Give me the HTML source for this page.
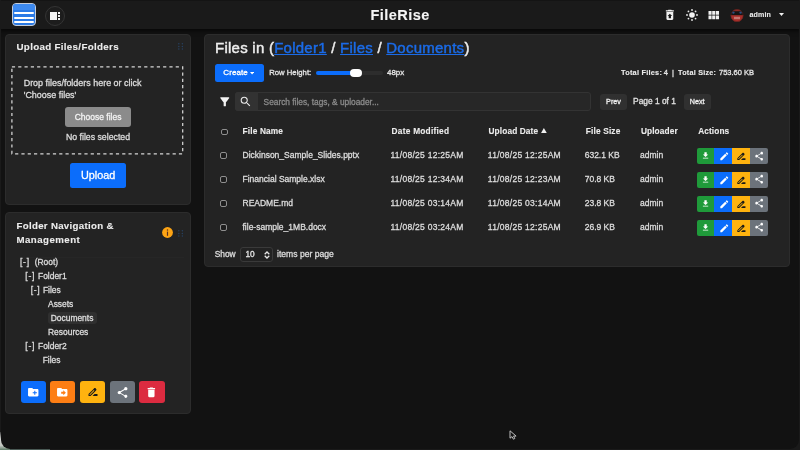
<!DOCTYPE html>
<html><head><meta charset="utf-8">
<style>
*{box-sizing:border-box;margin:0;padding:0}
html,body{width:800px;height:450px;overflow:hidden;background:#1a1a1a}
body{font-family:"Liberation Sans",sans-serif;position:relative}
#win{will-change:transform;position:absolute;left:1px;top:0;width:798px;height:449px;background:#121212;border-radius:0 0 9px 9px;overflow:hidden}
.r{position:absolute}
.t{position:absolute;white-space:nowrap;-webkit-text-stroke:0.3px currentColor}
</style></head><body>
<div class="r" style="left:0;top:432px;width:14px;height:18px;background:linear-gradient(#3a3a3a,#d0d2cf 40%,#c4c8c2 75%,#5f7d68)"></div><div class="r" style="left:10px;top:448px;width:40px;height:2px;background:#4a5a55"></div>
<div id="win">
<div style="position:absolute;left:-1px;top:0;width:800px;height:450px">

<div class="r" style="left:0px;top:0px;width:800px;height:28.5px;background:#1a1a1a;box-shadow:0 2px 4px rgba(0,0,0,.65)"></div>
<div class="r" style="left:0px;top:0px;width:800px;height:1px;background:#141414;"></div>
<div class="r" style="left:12px;top:3px;width:24px;height:23px;background:#2a7ae6;border:1px solid #c4ccd8;border-radius:4px"></div>
<div class="r" style="left:13px;top:4px;width:22px;height:6px;background:#3d8af0;border-radius:3px 3px 0 0"></div>
<div class="r" style="left:14px;top:12px;width:20px;height:2.4px;background:#fff;border-radius:1px"></div>
<div class="r" style="left:14px;top:16.7px;width:20px;height:2.4px;background:#fff;border-radius:1px"></div>
<div class="r" style="left:14px;top:21px;width:20px;height:2.4px;background:#fff;border-radius:1px"></div>
<div class="r" style="left:45px;top:6px;width:20px;height:20px;background:#1d1d1d;border:1px solid #343434;border-radius:50%"></div>
<div class="r" style="left:50px;top:11.6px;width:7.2px;height:8px;background:#f2f2f2;"></div>
<div class="r" style="left:58px;top:12px;width:2.1px;height:2px;background:#f2f2f2;"></div>
<div class="r" style="left:58px;top:15.1px;width:2.1px;height:2px;background:#f2f2f2;"></div>
<div class="r" style="left:58px;top:18px;width:2.1px;height:2px;background:#f2f2f2;"></div>
<div class="t" style="left:370.5px;top:7.73px;font-size:14.54px;line-height:14.54px;color:#f5f5f5;font-weight:bold;-webkit-text-stroke:0.1px currentColor;letter-spacing:0.459px;">FileRise</div>
<svg class="r" style="left:662.55px;top:8.30px;" width="13.68" height="13.68" viewBox="0 0 24 24"><path d="M19 4h-3.5l-1-1h-5l-1 1H5v2h14zM6 7v12c0 1.1.9 2 2 2h8c1.1 0 2-.9 2-2V7H6zm8 7v4h-4v-4H8l4-4 4 4h-2z" fill="#f0f0f0"/></svg>
<svg class="r" style="left:684.8px;top:7.8px;" width="14" height="14" viewBox="0 0 14 14"><circle cx="7" cy="7" r="2.8" fill="#f2f2f2"/><circle cx="7.00" cy="2.00" r="0.9" fill="#eaeaea"/><circle cx="10.54" cy="3.46" r="0.9" fill="#eaeaea"/><circle cx="12.00" cy="7.00" r="0.9" fill="#eaeaea"/><circle cx="10.54" cy="10.54" r="0.9" fill="#eaeaea"/><circle cx="7.00" cy="12.00" r="0.9" fill="#eaeaea"/><circle cx="3.46" cy="10.54" r="0.9" fill="#eaeaea"/><circle cx="2.00" cy="7.00" r="0.9" fill="#eaeaea"/><circle cx="3.46" cy="3.46" r="0.9" fill="#eaeaea"/></svg>
<svg class="r" style="left:706.30px;top:7.70px;" width="14.88" height="14.88" viewBox="0 0 24 24"><path d="M4 11h5V5H4v6zm0 7h5v-6H4v6zm6 0h5v-6h-5v6zm6 0h5v-6h-5v6zm-6-7h5V5h-5v6zm6-6v6h5V5h-5z" fill="#f0f0f0"/></svg>
<svg class="r" style="left:730.3px;top:9px;" width="14" height="13" viewBox="0 0 14 13"><defs><clipPath id="av"><circle cx="7" cy="6.5" r="6.3"/></clipPath></defs><g clip-path="url(#av)"><rect width="14" height="13" fill="#3a1a18"/><rect y="0" width="14" height="2.4" fill="#8a2a26"/><rect y="2.4" width="14" height="3.8" fill="#151515"/><rect y="6.2" width="14" height="7" fill="#a82e2a"/><rect x="4" y="7.8" width="6" height="2.4" fill="#d8b0a8" opacity=".55"/><circle cx="3.4" cy="3.6" r="1.2" fill="#2d4e80"/><circle cx="10.6" cy="3.6" r="1.2" fill="#2d4e80"/></g><circle cx="7" cy="6.5" r="6.1" fill="none" stroke="#5a2420" stroke-width=".6"/></svg>
<div class="t" style="left:749.4px;top:11.75px;font-size:7.1px;line-height:7.1px;color:#e8e8e8;font-weight:bold;-webkit-text-stroke:0.1px currentColor;letter-spacing:0.15px;">admin</div>
<svg class="r" style="left:778.8px;top:13.2px;" width="5" height="3" viewBox="0 0 5 3"><path d="M0 0h5L2.5 3z" fill="#f0f0f0"/></svg>
<div class="r" style="left:5px;top:33.5px;width:186px;height:171px;background:#232323;border:1px solid #2c2c2c;border-radius:4px"></div>
<div class="t" style="left:16.5px;top:42.20px;font-size:9.79px;line-height:9.79px;color:#ececec;font-weight:bold;-webkit-text-stroke:0.1px currentColor;letter-spacing:0.309px;">Upload Files/Folders</div>
<svg class="r" style="left:178px;top:43.4px;" width="6" height="7" viewBox="0 0 6 7"><circle cx="0.8" cy="0.8" r="0.75" fill="#27405f"/><circle cx="0.8" cy="3.4" r="0.75" fill="#27405f"/><circle cx="0.8" cy="6.0" r="0.75" fill="#27405f"/><circle cx="4.4" cy="0.8" r="0.75" fill="#27405f"/><circle cx="4.4" cy="3.4" r="0.75" fill="#27405f"/><circle cx="4.4" cy="6.0" r="0.75" fill="#27405f"/></svg>
<svg class="r" style="left:11.3px;top:66.3px;" width="173" height="89" viewBox="0 0 173 89"><rect x="0.9" y="0.9" width="170.8" height="86.9" fill="none" stroke="#d6d6d6" stroke-width="1.25" stroke-dasharray="3.2 3.1"/></svg>
<div class="t" style="left:23.7px;top:79.33px;font-size:8.95px;line-height:8.95px;color:#dcdcdc;">Drop files/folders here or click</div>
<div class="t" style="left:23.7px;top:91.23px;font-size:8.95px;line-height:8.95px;color:#dcdcdc;">'Choose files'</div>
<div class="r" style="left:64.8px;top:106.7px;width:66px;height:20px;background:#8b8b8b;border-radius:3px"></div>
<div class="t" style="left:74.7px;top:112.75px;font-size:8.5px;line-height:8.5px;color:#f2f2f2;">Choose files</div>
<div class="t" style="left:65.9px;top:133.12px;font-size:8.75px;line-height:8.75px;color:#dcdcdc;">No files selected</div>
<div class="r" style="left:69.9px;top:163.2px;width:56.3px;height:24.5px;background:#0b6dfb;border-radius:2.5px"></div>
<div class="t" style="left:81px;top:169.97px;font-size:10.85px;line-height:10.85px;color:#ffffff;">Upload</div>
<div class="r" style="left:5px;top:211.5px;width:185.5px;height:202px;background:#232323;border:1px solid #2c2c2c;border-radius:4px"></div>
<div class="t" style="left:16.5px;top:220.85px;font-size:9.69px;line-height:9.69px;color:#ececec;font-weight:bold;-webkit-text-stroke:0.1px currentColor;letter-spacing:0.306px;">Folder Navigation &amp;</div>
<div class="t" style="left:16.5px;top:234.95px;font-size:9.7px;line-height:9.7px;color:#ececec;font-weight:bold;-webkit-text-stroke:0.1px currentColor;letter-spacing:0.45px;">Management</div>
<svg class="r" style="left:161.9px;top:227.4px;" width="11" height="11" viewBox="0 0 11 11"><circle cx="5.5" cy="5.5" r="5.4" fill="#fda414"/><rect x="4.9" y="4.6" width="1.2" height="4.2" fill="#5a3020"/><circle cx="5.5" cy="3.1" r="0.75" fill="#5a3020"/></svg>
<svg class="r" style="left:178px;top:230px;" width="6" height="7" viewBox="0 0 6 7"><circle cx="0.8" cy="0.8" r="0.75" fill="#27405f"/><circle cx="0.8" cy="3.4" r="0.75" fill="#27405f"/><circle cx="0.8" cy="6.0" r="0.75" fill="#27405f"/><circle cx="4.4" cy="0.8" r="0.75" fill="#27405f"/><circle cx="4.4" cy="3.4" r="0.75" fill="#27405f"/><circle cx="4.4" cy="6.0" r="0.75" fill="#27405f"/></svg>
<div class="r" style="left:20px;top:256.5px;width:164px;height:1px;background:#262626;"></div>
<div class="r" style="left:48px;top:312px;width:48.5px;height:12px;background:#2f2f2f;border-radius:3px"></div>
<div class="t" style="left:20px;top:258.00px;font-size:8.6px;line-height:8.6px;color:#dcdcdc;letter-spacing:0.7px;">[-]</div>
<div class="t" style="left:34.7px;top:258.07px;font-size:8.45px;line-height:8.45px;color:#dcdcdc;">(Root)</div>
<div class="t" style="left:25.3px;top:271.95px;font-size:8.6px;line-height:8.6px;color:#dcdcdc;letter-spacing:0.7px;">[-]</div>
<div class="t" style="left:38px;top:272.02px;font-size:8.45px;line-height:8.45px;color:#dcdcdc;">Folder1</div>
<div class="t" style="left:30.7px;top:285.90px;font-size:8.6px;line-height:8.6px;color:#dcdcdc;letter-spacing:0.7px;">[-]</div>
<div class="t" style="left:42.9px;top:285.97px;font-size:8.45px;line-height:8.45px;color:#dcdcdc;">Files</div>
<div class="t" style="left:48px;top:299.92px;font-size:8.45px;line-height:8.45px;color:#dcdcdc;">Assets</div>
<div class="t" style="left:50.7px;top:313.88px;font-size:8.45px;line-height:8.45px;color:#dcdcdc;">Documents</div>
<div class="t" style="left:48px;top:327.82px;font-size:8.45px;line-height:8.45px;color:#dcdcdc;">Resources</div>
<div class="t" style="left:25.3px;top:341.70px;font-size:8.6px;line-height:8.6px;color:#dcdcdc;letter-spacing:0.7px;">[-]</div>
<div class="t" style="left:38px;top:341.77px;font-size:8.45px;line-height:8.45px;color:#dcdcdc;">Folder2</div>
<div class="t" style="left:42.7px;top:355.72px;font-size:8.45px;line-height:8.45px;color:#dcdcdc;">Files</div>
<div class="r" style="left:20.8px;top:381.3px;width:25.2px;height:22px;background:#0b6dfb;border-radius:3px"></div>
<div class="r" style="left:50.1px;top:381.3px;width:25.2px;height:22px;background:#fd7e14;border-radius:3px"></div>
<div class="r" style="left:80.1px;top:381.3px;width:25.2px;height:22px;background:#ffb30f;border-radius:3px"></div>
<div class="r" style="left:109.6px;top:381.3px;width:25.2px;height:22px;background:#6c737b;border-radius:3px"></div>
<div class="r" style="left:139.4px;top:381.3px;width:25.2px;height:22px;background:#dc2b40;border-radius:3px"></div>
<svg class="r" style="left:26.90px;top:386.00px;" width="12.48" height="12.48" viewBox="0 0 24 24"><path d="M20 6h-8l-2-2H4c-1.11 0-1.99.89-1.99 2L2 18c0 1.11.89 2 2 2h16c1.11 0 2-.89 2-2V8c0-1.11-.89-2-2-2zm-1 8h-3v3h-2v-3h-3v-2h3V9h2v3h3v2z" fill="#fff"/></svg>
<svg class="r" style="left:56.20px;top:386.00px;" width="12.48" height="12.48" viewBox="0 0 24 24"><path d="M20 6h-8l-2-2H4c-1.1 0-1.99.9-1.99 2L2 18c0 1.1.9 2 2 2h16c1.1 0 2-.9 2-2V8c0-1.1-.9-2-2-2zm-6 12v-3h-4v-4h4V8l5 5-5 5z" fill="#fff"/></svg>
<svg class="r" style="left:86.60px;top:386.30px;" width="12.00" height="12.00" viewBox="0 0 24 24"><path d="M18.41 5.8L17.2 4.59c-.78-.78-2.05-.78-2.83 0l-2.68 2.68L3 15.96V20h4.04l8.74-8.74 2.63-2.63c.79-.78.79-2.05 0-2.83zM6.21 18H5v-1.21l8.66-8.66 1.21 1.21L6.21 18zM11 20l4-4h6v4H11z" fill="#1a1a1a"/></svg>
<svg class="r" style="left:115.60px;top:385.70px;" width="13.08" height="13.08" viewBox="0 0 24 24"><path d="M18 16.08c-.76 0-1.44.3-1.96.77L8.91 12.7c.05-.23.09-.46.09-.7s-.04-.47-.09-.7l7.05-4.11c.54.5 1.25.81 2.04.81 1.66 0 3-1.34 3-3s-1.34-3-3-3-3 1.34-3 3c0 .24.04.47.09.7L8.04 9.81C7.5 9.31 6.79 9 6 9c-1.66 0-3 1.34-3 3s1.34 3 3 3c.79 0 1.5-.31 2.04-.81l7.12 4.16c-.05.21-.08.43-.08.65 0 1.61 1.31 2.92 2.92 2.92 1.61 0 2.92-1.31 2.92-2.92s-1.31-2.92-2.92-2.92z" fill="#fff"/></svg>
<svg class="r" style="left:145.45px;top:386.30px;" width="12.72" height="12.72" viewBox="0 0 24 24"><path d="M6 19c0 1.1.9 2 2 2h8c1.1 0 2-.9 2-2V7H6v12zM19 4h-3.5l-1-1h-5l-1 1H5v2h14V4z" fill="#fff"/></svg>
<div class="r" style="left:203.5px;top:33.5px;width:586px;height:233px;background:#232323;border:1px solid #2c2c2c;border-radius:4px"></div>
<div class="t" style="left:215px;top:40.20px;font-size:15.0px;line-height:15.0px;color:#eeeeee;letter-spacing:0.25px;-webkit-text-stroke:0.45px currentColor;">Files in (<span style="color:#1a6be8;text-decoration:underline;text-decoration-thickness:1px;text-underline-offset:0.6px">Folder1</span> / <span style="color:#1a6be8;text-decoration:underline;text-decoration-thickness:1px;text-underline-offset:0.6px">Files</span> / <span style="color:#1a6be8;text-decoration:underline;text-decoration-thickness:1px;text-underline-offset:0.6px">Documents</span>)</div>
<div class="r" style="left:214.9px;top:63.8px;width:49.3px;height:18.4px;background:#0b6dfb;border-radius:2.5px"></div>
<div class="t" style="left:223.3px;top:69.40px;font-size:8px;line-height:8px;color:#ffffff;letter-spacing:0.1px;">Create</div>
<svg class="r" style="left:249.8px;top:72.4px;" width="4.2" height="2.4" viewBox="0 0 4.2 2.4"><path d="M0 0h4.2L2.1 2.4z" fill="#fff"/></svg>
<div class="t" style="left:269.3px;top:69.15px;font-size:7.7px;line-height:7.7px;color:#e4e4e4;">Row Height:</div>
<div class="r" style="left:316px;top:71.4px;width:67px;height:3.8px;background:#2d2d2d;border-radius:2px"></div>
<div class="r" style="left:316px;top:71.4px;width:38px;height:3.8px;background:#0b6dfb;border-radius:2px"></div>
<div class="r" style="left:349.5px;top:68.9px;width:12.5px;height:8.2px;background:#ffffff;border-radius:4px"></div>
<div class="t" style="left:387px;top:68.75px;font-size:7.9px;line-height:7.9px;color:#e4e4e4;">48px</div>
<div class="t" style="left:621px;top:69.02px;font-size:7.36px;line-height:7.36px;color:#ececec;font-weight:bold;-webkit-text-stroke:0.1px currentColor;letter-spacing:0.232px;">Total Files:</div>
<div class="t" style="left:663.7px;top:68.95px;font-size:7.5px;line-height:7.5px;color:#e4e4e4;">4</div>
<div class="t" style="left:672px;top:68.95px;font-size:7.5px;line-height:7.5px;color:#e4e4e4;">|</div>
<div class="t" style="left:678.1px;top:69.09px;font-size:7.22px;line-height:7.22px;color:#ececec;font-weight:bold;-webkit-text-stroke:0.1px currentColor;letter-spacing:0.228px;">Total Size:</div>
<div class="t" style="left:719px;top:68.95px;font-size:7.5px;line-height:7.5px;color:#e4e4e4;">753.60 KB</div>
<svg class="r" style="left:218.40px;top:95.40px;" width="13.56" height="13.56" viewBox="0 0 24 24"><path d="M4.25 5.61C6.27 8.2 10 13 10 13v6c0 .55.45 1 1 1h2c.55 0 1-.45 1-1v-6s3.72-4.8 5.74-7.39A.998.998 0 0 0 18.95 4H5.04c-.83 0-1.3.95-.79 1.61z" fill="#f2f2f2"/></svg>
<div class="r" style="left:235px;top:92.1px;width:355.5px;height:19.3px;background:#272727;border:1px solid #333333;border-radius:3px"></div>
<div class="r" style="left:235px;top:92.1px;width:23px;height:19.3px;background:#323232;border-radius:3px 0 0 3px"></div>
<svg class="r" style="left:239.10px;top:95.20px;" width="13.20" height="13.20" viewBox="0 0 24 24"><path d="M15.5 14h-.79l-.28-.27A6.471 6.471 0 0 0 16 9.5 6.5 6.5 0 1 0 9.5 16c1.61 0 3.09-.59 4.23-1.57l.27.28v.79l5 4.99L20.49 19l-4.99-5zm-6 0C7.01 14 5 11.99 5 9.5S7.01 5 9.5 5 14 7.01 14 9.5 11.99 14 9.5 14z" fill="#eaeaea"/></svg>
<div class="t" style="left:263.6px;top:98.03px;font-size:8.33px;line-height:8.33px;color:#8a8a8a;">Search files, tags, &amp; uploader...</div>
<div class="r" style="left:599.9px;top:93.9px;width:26.7px;height:16px;background:#303030;border-radius:3px"></div>
<div class="t" style="left:606.1px;top:98.20px;font-size:7.2px;line-height:7.2px;color:#eeeeee;">Prev</div>
<div class="t" style="left:633.1px;top:97.10px;font-size:8.4px;line-height:8.4px;color:#e0e0e0;">Page 1 of 1</div>
<div class="r" style="left:683.6px;top:93.9px;width:27.4px;height:16px;background:#303030;border-radius:3px"></div>
<div class="t" style="left:689.8px;top:98.20px;font-size:7.2px;line-height:7.2px;color:#eeeeee;">Next</div>
<div class="r" style="left:221px;top:128.6px;width:6.8px;height:6.6px;background:#1d1d1d;border:1.1px solid #8f8f8f;border-radius:2px"></div>
<div class="t" style="left:242.5px;top:127.15px;font-size:8.3px;line-height:8.3px;color:#ececec;font-weight:bold;-webkit-text-stroke:0.1px currentColor;letter-spacing:0.16px;">File Name</div>
<div class="t" style="left:391.6px;top:127.15px;font-size:8.3px;line-height:8.3px;color:#ececec;font-weight:bold;-webkit-text-stroke:0.1px currentColor;letter-spacing:0.25px;">Date Modified</div>
<div class="t" style="left:488.5px;top:127.15px;font-size:8.3px;line-height:8.3px;color:#ececec;font-weight:bold;-webkit-text-stroke:0.1px currentColor;letter-spacing:0.12px;">Upload Date</div>
<svg class="r" style="left:541.3px;top:128.2px;" width="5.8" height="5.1" viewBox="0 0 5.8 5.1"><path d="M2.9 0L5.8 5.1H0z" fill="#f0f0f0"/></svg>
<div class="t" style="left:585.8px;top:127.15px;font-size:8.3px;line-height:8.3px;color:#ececec;font-weight:bold;-webkit-text-stroke:0.1px currentColor;letter-spacing:0.16px;">File Size</div>
<div class="t" style="left:640.9px;top:127.15px;font-size:8.3px;line-height:8.3px;color:#ececec;font-weight:bold;-webkit-text-stroke:0.1px currentColor;letter-spacing:0.11px;">Uploader</div>
<div class="t" style="left:698.2px;top:127.15px;font-size:8.3px;line-height:8.3px;color:#ececec;font-weight:bold;-webkit-text-stroke:0.1px currentColor;letter-spacing:0.1px;">Actions</div>
<div class="r" style="left:220px;top:152.29999999999998px;width:6.8px;height:6.6px;background:#1d1d1d;border:1.1px solid #8f8f8f;border-radius:2px"></div>
<div class="t" style="left:242.5px;top:151.35px;font-size:8.5px;line-height:8.5px;color:#dcdcdc;">Dickinson_Sample_Slides.pptx</div>
<div class="t" style="left:390.5px;top:151.35px;font-size:8.5px;line-height:8.5px;color:#dcdcdc;letter-spacing:0.27px;">11/08/25 12:25AM</div>
<div class="t" style="left:487.8px;top:151.35px;font-size:8.5px;line-height:8.5px;color:#dcdcdc;letter-spacing:0.27px;">11/08/25 12:25AM</div>
<div class="t" style="left:584.7px;top:151.35px;font-size:8.5px;line-height:8.5px;color:#dcdcdc;">632.1 KB</div>
<div class="t" style="left:640px;top:151.35px;font-size:8.5px;line-height:8.5px;color:#dcdcdc;">admin</div>
<div class="r" style="left:697px;top:147.9px;width:17.4px;height:16.1px;background:#1f9a3a;border-radius:2px 0 0 2px"></div>
<div class="r" style="left:714.4px;top:147.9px;width:17.7px;height:16.1px;background:#0b6dfb;"></div>
<div class="r" style="left:732.1px;top:147.9px;width:17.9px;height:16.1px;background:#ffb30f;"></div>
<div class="r" style="left:750px;top:147.9px;width:18px;height:16.1px;background:#6c737b;border-radius:0 2px 2px 0"></div>
<svg class="r" style="left:701.40px;top:150.90px;" width="9.12" height="9.12" viewBox="0 0 24 24"><path d="M19 9h-4V3H9v6H5l7 7 7-7zM5 18v2h14v-2H5z" fill="#fff"/></svg>
<svg class="r" style="left:718.50px;top:151.00px;" width="10.56" height="10.56" viewBox="0 0 24 24"><path d="M3 17.25V21h3.75L17.81 9.94l-3.75-3.75L3 17.25zM20.71 7.04a1 1 0 0 0 0-1.41l-2.34-2.34a1 1 0 0 0-1.41 0l-1.83 1.83 3.75 3.75 1.83-1.83z" fill="#fff"/></svg>
<svg class="r" style="left:735.50px;top:150.80px;" width="10.80" height="10.80" viewBox="0 0 24 24"><path d="M18.41 5.8L17.2 4.59c-.78-.78-2.05-.78-2.83 0l-2.68 2.68L3 15.96V20h4.04l8.74-8.74 2.63-2.63c.79-.78.79-2.05 0-2.83zM6.21 18H5v-1.21l8.66-8.66 1.21 1.21L6.21 18zM11 20l4-4h6v4H11z" fill="#1a1a1a"/></svg>
<svg class="r" style="left:754.30px;top:150.50px;" width="10.32" height="10.32" viewBox="0 0 24 24"><path d="M18 16.08c-.76 0-1.44.3-1.96.77L8.91 12.7c.05-.23.09-.46.09-.7s-.04-.47-.09-.7l7.05-4.11c.54.5 1.25.81 2.04.81 1.66 0 3-1.34 3-3s-1.34-3-3-3-3 1.34-3 3c0 .24.04.47.09.7L8.04 9.81C7.5 9.31 6.79 9 6 9c-1.66 0-3 1.34-3 3s1.34 3 3 3c.79 0 1.5-.31 2.04-.81l7.12 4.16c-.05.21-.08.43-.08.65 0 1.61 1.31 2.92 2.92 2.92 1.61 0 2.92-1.31 2.92-2.92s-1.31-2.92-2.92-2.92z" fill="#fff"/></svg>
<div class="r" style="left:220px;top:176.2px;width:6.8px;height:6.6px;background:#1d1d1d;border:1.1px solid #8f8f8f;border-radius:2px"></div>
<div class="t" style="left:242.5px;top:175.25px;font-size:8.5px;line-height:8.5px;color:#dcdcdc;">Financial Sample.xlsx</div>
<div class="t" style="left:390.5px;top:175.25px;font-size:8.5px;line-height:8.5px;color:#dcdcdc;letter-spacing:0.27px;">11/08/25 12:34AM</div>
<div class="t" style="left:487.8px;top:175.25px;font-size:8.5px;line-height:8.5px;color:#dcdcdc;letter-spacing:0.27px;">11/08/25 12:23AM</div>
<div class="t" style="left:584.7px;top:175.25px;font-size:8.5px;line-height:8.5px;color:#dcdcdc;">70.8 KB</div>
<div class="t" style="left:640px;top:175.25px;font-size:8.5px;line-height:8.5px;color:#dcdcdc;">admin</div>
<div class="r" style="left:697px;top:171.8px;width:17.4px;height:16.1px;background:#1f9a3a;border-radius:2px 0 0 2px"></div>
<div class="r" style="left:714.4px;top:171.8px;width:17.7px;height:16.1px;background:#0b6dfb;"></div>
<div class="r" style="left:732.1px;top:171.8px;width:17.9px;height:16.1px;background:#ffb30f;"></div>
<div class="r" style="left:750px;top:171.8px;width:18px;height:16.1px;background:#6c737b;border-radius:0 2px 2px 0"></div>
<svg class="r" style="left:701.40px;top:174.80px;" width="9.12" height="9.12" viewBox="0 0 24 24"><path d="M19 9h-4V3H9v6H5l7 7 7-7zM5 18v2h14v-2H5z" fill="#fff"/></svg>
<svg class="r" style="left:718.50px;top:174.90px;" width="10.56" height="10.56" viewBox="0 0 24 24"><path d="M3 17.25V21h3.75L17.81 9.94l-3.75-3.75L3 17.25zM20.71 7.04a1 1 0 0 0 0-1.41l-2.34-2.34a1 1 0 0 0-1.41 0l-1.83 1.83 3.75 3.75 1.83-1.83z" fill="#fff"/></svg>
<svg class="r" style="left:735.50px;top:174.70px;" width="10.80" height="10.80" viewBox="0 0 24 24"><path d="M18.41 5.8L17.2 4.59c-.78-.78-2.05-.78-2.83 0l-2.68 2.68L3 15.96V20h4.04l8.74-8.74 2.63-2.63c.79-.78.79-2.05 0-2.83zM6.21 18H5v-1.21l8.66-8.66 1.21 1.21L6.21 18zM11 20l4-4h6v4H11z" fill="#1a1a1a"/></svg>
<svg class="r" style="left:754.30px;top:174.40px;" width="10.32" height="10.32" viewBox="0 0 24 24"><path d="M18 16.08c-.76 0-1.44.3-1.96.77L8.91 12.7c.05-.23.09-.46.09-.7s-.04-.47-.09-.7l7.05-4.11c.54.5 1.25.81 2.04.81 1.66 0 3-1.34 3-3s-1.34-3-3-3-3 1.34-3 3c0 .24.04.47.09.7L8.04 9.81C7.5 9.31 6.79 9 6 9c-1.66 0-3 1.34-3 3s1.34 3 3 3c.79 0 1.5-.31 2.04-.81l7.12 4.16c-.05.21-.08.43-.08.65 0 1.61 1.31 2.92 2.92 2.92 1.61 0 2.92-1.31 2.92-2.92s-1.31-2.92-2.92-2.92z" fill="#fff"/></svg>
<div class="r" style="left:220px;top:200.09999999999997px;width:6.8px;height:6.6px;background:#1d1d1d;border:1.1px solid #8f8f8f;border-radius:2px"></div>
<div class="t" style="left:242.5px;top:199.15px;font-size:8.5px;line-height:8.5px;color:#dcdcdc;">README.md</div>
<div class="t" style="left:390.5px;top:199.15px;font-size:8.5px;line-height:8.5px;color:#dcdcdc;letter-spacing:0.27px;">11/08/25 03:14AM</div>
<div class="t" style="left:487.8px;top:199.15px;font-size:8.5px;line-height:8.5px;color:#dcdcdc;letter-spacing:0.27px;">11/08/25 03:14AM</div>
<div class="t" style="left:584.7px;top:199.15px;font-size:8.5px;line-height:8.5px;color:#dcdcdc;">23.8 KB</div>
<div class="t" style="left:640px;top:199.15px;font-size:8.5px;line-height:8.5px;color:#dcdcdc;">admin</div>
<div class="r" style="left:697px;top:195.7px;width:17.4px;height:16.1px;background:#1f9a3a;border-radius:2px 0 0 2px"></div>
<div class="r" style="left:714.4px;top:195.7px;width:17.7px;height:16.1px;background:#0b6dfb;"></div>
<div class="r" style="left:732.1px;top:195.7px;width:17.9px;height:16.1px;background:#ffb30f;"></div>
<div class="r" style="left:750px;top:195.7px;width:18px;height:16.1px;background:#6c737b;border-radius:0 2px 2px 0"></div>
<svg class="r" style="left:701.40px;top:198.70px;" width="9.12" height="9.12" viewBox="0 0 24 24"><path d="M19 9h-4V3H9v6H5l7 7 7-7zM5 18v2h14v-2H5z" fill="#fff"/></svg>
<svg class="r" style="left:718.50px;top:198.80px;" width="10.56" height="10.56" viewBox="0 0 24 24"><path d="M3 17.25V21h3.75L17.81 9.94l-3.75-3.75L3 17.25zM20.71 7.04a1 1 0 0 0 0-1.41l-2.34-2.34a1 1 0 0 0-1.41 0l-1.83 1.83 3.75 3.75 1.83-1.83z" fill="#fff"/></svg>
<svg class="r" style="left:735.50px;top:198.60px;" width="10.80" height="10.80" viewBox="0 0 24 24"><path d="M18.41 5.8L17.2 4.59c-.78-.78-2.05-.78-2.83 0l-2.68 2.68L3 15.96V20h4.04l8.74-8.74 2.63-2.63c.79-.78.79-2.05 0-2.83zM6.21 18H5v-1.21l8.66-8.66 1.21 1.21L6.21 18zM11 20l4-4h6v4H11z" fill="#1a1a1a"/></svg>
<svg class="r" style="left:754.30px;top:198.30px;" width="10.32" height="10.32" viewBox="0 0 24 24"><path d="M18 16.08c-.76 0-1.44.3-1.96.77L8.91 12.7c.05-.23.09-.46.09-.7s-.04-.47-.09-.7l7.05-4.11c.54.5 1.25.81 2.04.81 1.66 0 3-1.34 3-3s-1.34-3-3-3-3 1.34-3 3c0 .24.04.47.09.7L8.04 9.81C7.5 9.31 6.79 9 6 9c-1.66 0-3 1.34-3 3s1.34 3 3 3c.79 0 1.5-.31 2.04-.81l7.12 4.16c-.05.21-.08.43-.08.65 0 1.61 1.31 2.92 2.92 2.92 1.61 0 2.92-1.31 2.92-2.92s-1.31-2.92-2.92-2.92z" fill="#fff"/></svg>
<div class="r" style="left:220px;top:223.99999999999997px;width:6.8px;height:6.6px;background:#1d1d1d;border:1.1px solid #8f8f8f;border-radius:2px"></div>
<div class="t" style="left:242.5px;top:223.05px;font-size:8.5px;line-height:8.5px;color:#dcdcdc;">file-sample_1MB.docx</div>
<div class="t" style="left:390.5px;top:223.05px;font-size:8.5px;line-height:8.5px;color:#dcdcdc;letter-spacing:0.27px;">11/08/25 03:24AM</div>
<div class="t" style="left:487.8px;top:223.05px;font-size:8.5px;line-height:8.5px;color:#dcdcdc;letter-spacing:0.27px;">11/08/25 12:25AM</div>
<div class="t" style="left:584.7px;top:223.05px;font-size:8.5px;line-height:8.5px;color:#dcdcdc;">26.9 KB</div>
<div class="t" style="left:640px;top:223.05px;font-size:8.5px;line-height:8.5px;color:#dcdcdc;">admin</div>
<div class="r" style="left:697px;top:219.6px;width:17.4px;height:16.1px;background:#1f9a3a;border-radius:2px 0 0 2px"></div>
<div class="r" style="left:714.4px;top:219.6px;width:17.7px;height:16.1px;background:#0b6dfb;"></div>
<div class="r" style="left:732.1px;top:219.6px;width:17.9px;height:16.1px;background:#ffb30f;"></div>
<div class="r" style="left:750px;top:219.6px;width:18px;height:16.1px;background:#6c737b;border-radius:0 2px 2px 0"></div>
<svg class="r" style="left:701.40px;top:222.60px;" width="9.12" height="9.12" viewBox="0 0 24 24"><path d="M19 9h-4V3H9v6H5l7 7 7-7zM5 18v2h14v-2H5z" fill="#fff"/></svg>
<svg class="r" style="left:718.50px;top:222.70px;" width="10.56" height="10.56" viewBox="0 0 24 24"><path d="M3 17.25V21h3.75L17.81 9.94l-3.75-3.75L3 17.25zM20.71 7.04a1 1 0 0 0 0-1.41l-2.34-2.34a1 1 0 0 0-1.41 0l-1.83 1.83 3.75 3.75 1.83-1.83z" fill="#fff"/></svg>
<svg class="r" style="left:735.50px;top:222.50px;" width="10.80" height="10.80" viewBox="0 0 24 24"><path d="M18.41 5.8L17.2 4.59c-.78-.78-2.05-.78-2.83 0l-2.68 2.68L3 15.96V20h4.04l8.74-8.74 2.63-2.63c.79-.78.79-2.05 0-2.83zM6.21 18H5v-1.21l8.66-8.66 1.21 1.21L6.21 18zM11 20l4-4h6v4H11z" fill="#1a1a1a"/></svg>
<svg class="r" style="left:754.30px;top:222.20px;" width="10.32" height="10.32" viewBox="0 0 24 24"><path d="M18 16.08c-.76 0-1.44.3-1.96.77L8.91 12.7c.05-.23.09-.46.09-.7s-.04-.47-.09-.7l7.05-4.11c.54.5 1.25.81 2.04.81 1.66 0 3-1.34 3-3s-1.34-3-3-3-3 1.34-3 3c0 .24.04.47.09.7L8.04 9.81C7.5 9.31 6.79 9 6 9c-1.66 0-3 1.34-3 3s1.34 3 3 3c.79 0 1.5-.31 2.04-.81l7.12 4.16c-.05.21-.08.43-.08.65 0 1.61 1.31 2.92 2.92 2.92 1.61 0 2.92-1.31 2.92-2.92s-1.31-2.92-2.92-2.92z" fill="#fff"/></svg>
<div class="t" style="left:214.7px;top:250.00px;font-size:8.4px;line-height:8.4px;color:#dcdcdc;">Show</div>
<div class="r" style="left:240.1px;top:247.2px;width:32.5px;height:14.6px;background:#222222;border:1px solid #3a3a3a;border-radius:3px"></div>
<div class="t" style="left:245.4px;top:249.95px;font-size:8.3px;line-height:8.3px;color:#e6e6e6;">10</div>
<svg class="r" style="left:263.6px;top:250.6px;" width="6" height="8" viewBox="0 0 6 8"><path d="M0.7 3.3L3 1L5.3 3.3M0.7 4.7L3 7L5.3 4.7" fill="none" stroke="#e6e6e6" stroke-width="1.25"/></svg>
<div class="t" style="left:277px;top:249.90px;font-size:8.6px;line-height:8.6px;color:#dcdcdc;">items per page</div>
<svg class="r" style="left:509px;top:429.5px;" width="8" height="10" viewBox="0 0 8 10"><path d="M1 0.8V8.2L3 6.6L4.4 9.2L5.8 8.5L4.5 6.1H7.1z" fill="#111" stroke="#bdbdbd" stroke-width="1"/></svg>
</div></div></body></html>
